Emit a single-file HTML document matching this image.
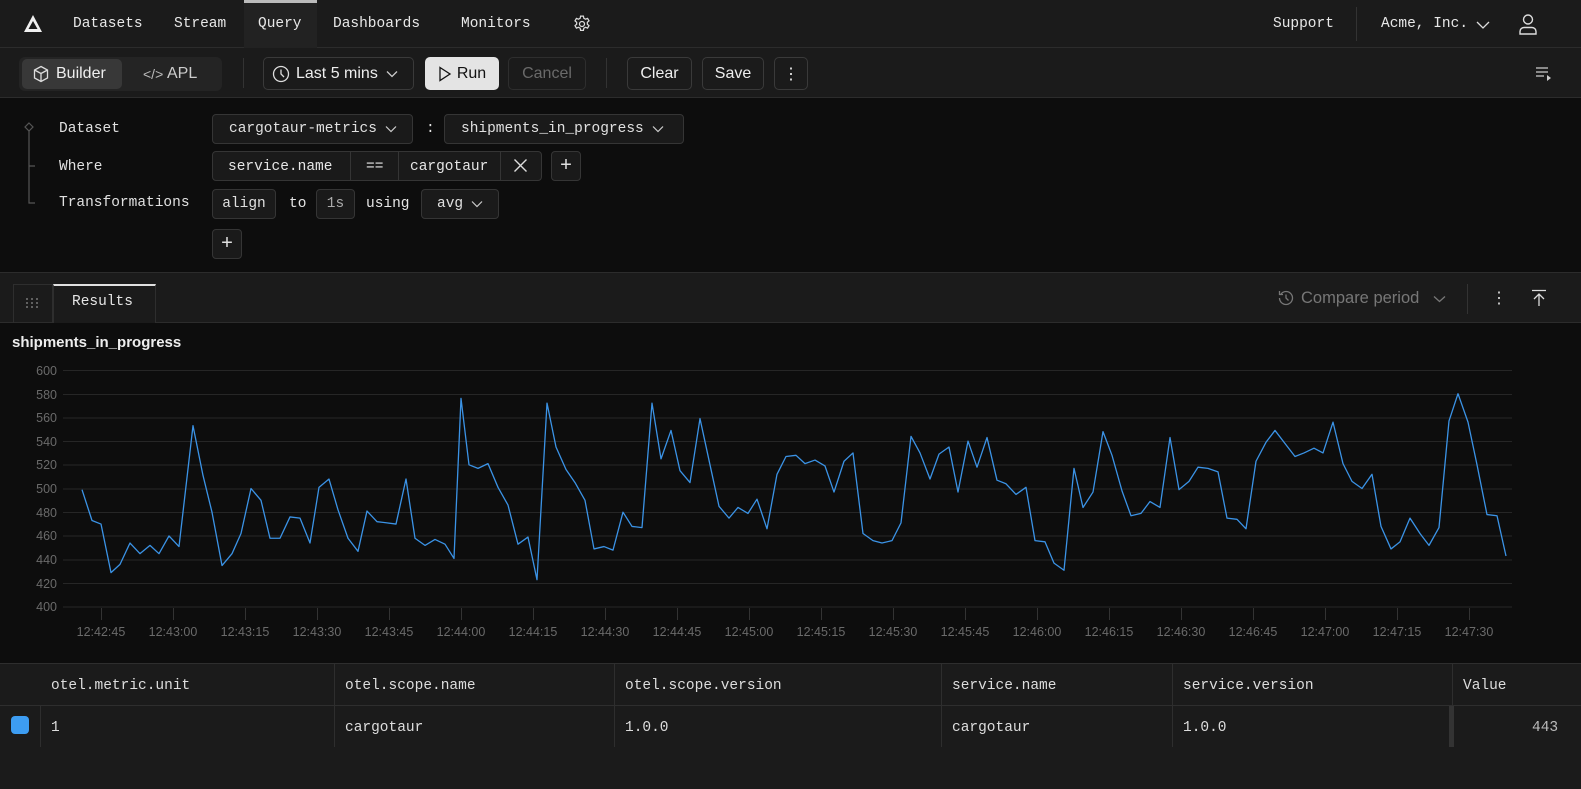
<!DOCTYPE html>
<html><head><meta charset="utf-8"><style>
*{box-sizing:border-box;margin:0;padding:0}
body{width:1581px;height:789px;background:#0d0d0d;color:#e6e6e6;font-family:"Liberation Sans",sans-serif;position:relative;overflow:hidden}
.a{position:absolute}
.mono{font-family:"Liberation Mono",monospace}
.nav{left:0;top:0;width:1581px;height:48px;background:#1b1b1b;border-bottom:1px solid #2c2c2c}
.nav .t{position:absolute;top:16px;font-size:14.5px;color:#e8e8e8}
.tb{left:0;top:48px;width:1581px;height:50px;background:#1b1b1b;border-bottom:1px solid #2c2c2c}
.btn{position:absolute;top:9px;height:33px;border:1px solid #3a3a3a;border-radius:5px;font-size:16px;display:flex;align-items:center;justify-content:center;color:#eee;padding-top:1px}
.chip{position:absolute;height:30px;border:1px solid #353535;border-radius:4px;background:#1a1a1a;font-family:"Liberation Mono",monospace;font-size:14.5px;color:#e0e0e0;display:flex;align-items:center}
.lbl{position:absolute;left:59px;font-family:"Liberation Mono",monospace;font-size:14.5px;color:#e0e0e0}
.th{position:absolute;top:678px;font-family:"Liberation Mono",monospace;font-size:14.5px;color:#ddd}
.td{position:absolute;top:720px;font-family:"Liberation Mono",monospace;font-size:14.5px;color:#ddd}
.vl{position:absolute;width:1px;background:#2e2e2e}
</style></head><body>
<div class="a nav">
 <svg class="a" style="left:22px;top:14px" width="22" height="20" viewBox="0 0 22 20"><path d="M11 1 L2 18 H20 Z M11 7 L6.5 15 H15.5 Z" fill="#f0f0f0" fill-rule="evenodd"/></svg>
 <div class="a" style="left:244px;top:0;width:73px;height:48px;background:#222"></div>
 <div class="a" style="left:244px;top:0;width:73px;height:3px;background:#bbb"></div>
 <span class="t mono" style="left:73px">Datasets</span>
 <span class="t mono" style="left:174px">Stream</span>
 <span class="t mono" style="left:258px">Query</span>
 <span class="t mono" style="left:333px">Dashboards</span>
 <span class="t mono" style="left:461px">Monitors</span>
 <svg class="a" style="left:572px;top:14px" width="20" height="20" viewBox="0 0 24 24" fill="none" stroke="#ddd" stroke-width="1.5"><path d="M10.3 2.5h3.4l.5 2.6 2 1.1 2.5-.9 1.7 2.9-2 1.8v2.2l2 1.8-1.7 2.9-2.5-.9-2 1.1-.5 2.6h-3.4l-.5-2.6-2-1.1-2.5.9-1.7-2.9 2-1.8V10L3.6 8.2l1.7-2.9 2.5.9 2-1.1z"/><circle cx="12" cy="12" r="3"/></svg>
 <span class="t mono" style="left:1273px">Support</span>
 <div class="a" style="left:1356px;top:7px;width:1px;height:34px;background:#333"></div>
 <span class="t mono" style="left:1381px">Acme, Inc.</span>
 <svg class="a" style="left:1476px;top:20px" width="14" height="10" viewBox="0 0 14 10"><path d="M1 2l6 6 6-6" fill="none" stroke="#ddd" stroke-width="1.3"/></svg>
 <svg class="a" style="left:1518px;top:13px" width="20" height="22" viewBox="0 0 20 22" fill="none" stroke="#ddd" stroke-width="1.4"><circle cx="10" cy="6.5" r="4.5"/><path d="M2 21v-2.5a4 4 0 014-4h8a4 4 0 014 4V21z"/></svg>
</div>
<div class="a tb">
 <div class="a" style="left:19px;top:9px;width:203px;height:34px;background:#242424;border-radius:6px"></div>
 <div class="a" style="left:22px;top:11px;width:100px;height:30px;background:#383838;border-radius:5px"></div>
 <svg class="a" style="left:32px;top:17px" width="18" height="18" viewBox="0 0 18 18" fill="none" stroke="#ddd" stroke-width="1.3"><path d="M9 1.5l6.5 3.5v8L9 16.5 2.5 13V5z M2.5 5L9 8.5 15.5 5 M9 8.5v8"/></svg>
 <span class="a" style="left:56px;top:17px;font-size:16px;color:#eee">Builder</span>
 <span class="a" style="left:143px;top:18px;font-size:14px;color:#bbb">&lt;/&gt;</span>
 <span class="a" style="left:167px;top:17px;font-size:16px;color:#ccc">APL</span>
 <div class="a" style="left:243px;top:10px;width:1px;height:30px;background:#333"></div>
 <div class="btn" style="left:263px;width:151px;justify-content:flex-start;padding-left:8px"><svg width="18" height="18" viewBox="0 0 18 18" fill="none" stroke="#ddd" stroke-width="1.3"><circle cx="9" cy="9" r="7.5"/><path d="M9 4.5V9l3 3"/></svg><span style="margin-left:6px">Last 5 mins</span><svg style="margin-left:8px" width="12" height="8" viewBox="0 0 12 8"><path d="M1 1.5l5 5 5-5" fill="none" stroke="#ccc" stroke-width="1.3"/></svg></div>
 <div class="btn" style="left:425px;width:74px;background:#e4e4e4;border-color:#e4e4e4;color:#111"><svg width="14" height="16" viewBox="0 0 14 16"><path d="M2 1.5l10 6.5-10 6.5z" fill="none" stroke="#111" stroke-width="1.3"/></svg><span style="margin-left:5px">Run</span></div>
 <div class="btn" style="left:508px;width:78px;color:#6a6a6a;border-color:#2e2e2e">Cancel</div>
 <div class="a" style="left:606px;top:10px;width:1px;height:30px;background:#333"></div>
 <div class="btn" style="left:627px;width:65px">Clear</div>
 <div class="btn" style="left:702px;width:62px">Save</div>
 <div class="btn" style="left:774px;width:34px">⋮</div>
 <svg class="a" style="left:1535px;top:18px" width="18" height="16" viewBox="0 0 18 16"><path d="M1 2h12M1 6h12M1 10h8" stroke="#ccc" stroke-width="1.3"/><path d="M12 9l4 3-4 3z" fill="#ccc"/></svg>
</div>
<!-- query builder -->
<svg class="a" style="left:22px;top:120px" width="14" height="90" viewBox="0 0 14 90" fill="none" stroke="#555" stroke-width="1.2"><path d="M7 3l4 4-4 4-4-4z"/><path d="M7 11v72h6M7 46h6"/></svg>
<span class="lbl" style="top:121px">Dataset</span>
<span class="lbl" style="top:159px">Where</span>
<span class="lbl" style="top:195px">Transformations</span>
<div class="chip" style="left:212px;top:114px;width:201px;padding-left:16px">cargotaur-metrics<svg style="margin-left:8px" width="12" height="8" viewBox="0 0 12 8"><path d="M1 1.5l5 5 5-5" fill="none" stroke="#ccc" stroke-width="1.2"/></svg></div>
<span class="a mono" style="left:426px;top:121px;font-size:14.5px">:</span>
<div class="chip" style="left:444px;top:114px;width:240px;padding-left:16px">shipments_in_progress<svg style="margin-left:8px" width="12" height="8" viewBox="0 0 12 8"><path d="M1 1.5l5 5 5-5" fill="none" stroke="#ccc" stroke-width="1.2"/></svg></div>
<div class="chip" style="left:212px;top:151px;width:330px"></div>
<span class="a mono" style="left:228px;top:159px;font-size:14.5px">service.name</span>
<div class="vl" style="left:350px;top:152px;height:28px;background:#353535"></div>
<span class="a mono" style="left:366px;top:159px;font-size:14.5px">==</span>
<div class="vl" style="left:398px;top:152px;height:28px;background:#353535"></div>
<span class="a mono" style="left:410px;top:159px;font-size:14.5px">cargotaur</span>
<div class="vl" style="left:500px;top:152px;height:28px;background:#353535"></div>
<svg class="a" style="left:513px;top:158px" width="15" height="15" viewBox="0 0 15 15"><path d="M1.5 1.5l12 12M13.5 1.5l-12 12" stroke="#ddd" stroke-width="1.4"/></svg>
<div class="chip" style="left:551px;top:151px;width:30px;justify-content:center;font-size:20px">+</div>
<div class="chip" style="left:212px;top:189px;width:64px;justify-content:center">align</div>
<span class="a mono" style="left:289px;top:196px;font-size:14.5px">to</span>
<div class="chip" style="left:316px;top:189px;width:39px;justify-content:center;color:#aaa">1s</div>
<span class="a mono" style="left:366px;top:196px;font-size:14.5px">using</span>
<div class="chip" style="left:421px;top:189px;width:78px;padding-left:15px">avg<svg style="margin-left:8px" width="12" height="8" viewBox="0 0 12 8"><path d="M1 1.5l5 5 5-5" fill="none" stroke="#ccc" stroke-width="1.2"/></svg></div>
<div class="chip" style="left:212px;top:229px;width:30px;justify-content:center;font-size:20px">+</div>
<!-- results bar -->
<div class="a" style="left:0;top:272px;width:1581px;height:51px;background:#1b1b1b;border-top:1px solid #2c2c2c;border-bottom:1px solid #2c2c2c"></div>
<div class="a" style="left:13px;top:284px;width:40px;height:39px;border:1px solid #2e2e2e;border-bottom:none"></div>
<svg class="a" style="left:25px;top:297px" width="14" height="12" viewBox="0 0 14 12" fill="#777"><circle cx="2" cy="2" r="1"/><circle cx="7" cy="2" r="1"/><circle cx="12" cy="2" r="1"/><circle cx="2" cy="6" r="1"/><circle cx="7" cy="6" r="1"/><circle cx="12" cy="6" r="1"/><circle cx="2" cy="10" r="1"/><circle cx="7" cy="10" r="1"/><circle cx="12" cy="10" r="1"/></svg>
<div class="a" style="left:53px;top:284px;width:103px;height:39px;background:#1b1b1b;border:1px solid #2e2e2e;border-top:2px solid #e0e0e0;border-bottom:none"></div>
<span class="a mono" style="left:72px;top:294px;font-size:14.5px">Results</span>
<svg class="a" style="left:1277px;top:289px" width="18" height="18" viewBox="0 0 18 18" fill="none" stroke="#777" stroke-width="1.3"><path d="M2.5 9a6.5 6.5 0 106.5-6.5A6.5 6.5 0 004 5M2.5 2v3.5H6"/><path d="M9 5.5V9l2.5 2.5"/></svg>
<span class="a" style="left:1301px;top:289px;font-size:16.5px;color:#777">Compare period</span>
<svg class="a" style="left:1433px;top:295px" width="13" height="8" viewBox="0 0 13 8"><path d="M1 1.5l5.5 5 5.5-5" fill="none" stroke="#777" stroke-width="1.3"/></svg>
<div class="a" style="left:1467px;top:284px;width:1px;height:30px;background:#333"></div>
<span class="a" style="left:1491px;top:288px;font-size:16px;color:#ddd">⋮</span>
<svg class="a" style="left:1530px;top:289px" width="18" height="18" viewBox="0 0 18 18" fill="none" stroke="#ddd" stroke-width="1.3"><path d="M2 1.5h14M9 17V5M4 10l5-5 5 5"/></svg>
<!-- chart -->
<span class="a" style="left:12px;top:334px;font-size:15px;font-weight:bold;color:#eee">shipments_in_progress</span>
<svg class="a" style="left:0;top:0" width="1581" height="663">
 <g stroke="#262626" stroke-width="1">
  <path d="M63 370.5H1512M63 394.5H1512M63 418H1512M63 441.5H1512M63 465H1512M63 489H1512M63 512.5H1512M63 536H1512M63 560H1512M63 583.5H1512M63 607H1512"/>
 </g>
 <g stroke="#333" stroke-width="1"><path d="M101.5 608v12M173.5 608v12M245.5 608v12M317.5 608v12M389.5 608v12M461.5 608v12M533.5 608v12M605.5 608v12M677.5 608v12M749.5 608v12M821.5 608v12M893.5 608v12M965.5 608v12M1037.5 608v12M1109.5 608v12M1181.5 608v12M1253.5 608v12M1325.5 608v12M1397.5 608v12M1469.5 608v12"/></g>
 <g font-family="Liberation Sans, sans-serif" font-size="12.5" fill="#6a6a6a" text-anchor="end">
  <text x="57" y="375">600</text><text x="57" y="399">580</text><text x="57" y="422">560</text><text x="57" y="446">540</text><text x="57" y="469">520</text><text x="57" y="493">500</text><text x="57" y="517">480</text><text x="57" y="540">460</text><text x="57" y="564">440</text><text x="57" y="588">420</text><text x="57" y="611">400</text>
 </g>
 <g font-family="Liberation Sans, sans-serif" font-size="12.5" fill="#6a6a6a" text-anchor="middle">
  <text x="101" y="636">12:42:45</text><text x="173" y="636">12:43:00</text><text x="245" y="636">12:43:15</text><text x="317" y="636">12:43:30</text><text x="389" y="636">12:43:45</text><text x="461" y="636">12:44:00</text><text x="533" y="636">12:44:15</text><text x="605" y="636">12:44:30</text><text x="677" y="636">12:44:45</text><text x="749" y="636">12:45:00</text><text x="821" y="636">12:45:15</text><text x="893" y="636">12:45:30</text><text x="965" y="636">12:45:45</text><text x="1037" y="636">12:46:00</text><text x="1109" y="636">12:46:15</text><text x="1181" y="636">12:46:30</text><text x="1253" y="636">12:46:45</text><text x="1325" y="636">12:47:00</text><text x="1397" y="636">12:47:15</text><text x="1469" y="636">12:47:30</text>
 </g>
 <polyline transform="matrix(1,0,0,-1.185,0,1081)" vector-effect="non-scaling-stroke" fill="none" stroke="#3b93e6" stroke-width="1.3" stroke-linejoin="round" points="82,499 92,473 101,470 111,429 120,436 130,454 140,445 150,452 159,445 169,460 179,451 193,553 203,511 212,480 222,435 232,445 241,462 251,500 261,490 270,458 280,458 290,476 300,475 310,454 319,501 329,508 338,482 348,458 358,447 367,481 377,472 387,471 396,470 406,508 415,458 425,452 435,457 445,453 454,441 461,576 469,520 478,517 488,521 498,501 508,486 518,453 528,459 537,423 547,572 556,535 566,516 575,505 585,490 594,449 604,451 613,448 623,480 632,468 642,467 652,572 661,525 671,549 680,515 690,505 700,559 710,520 719,485 729,475 738,484 748,479 757,491 767,466 777,512 786,527 796,528 805,521 815,524 825,519 834,497 844,523 853,530 863,462 873,456 882,454 892,456 901,471 911,544 920,530 930,508 939,529 949,535 958,497 968,540 977,518 987,543 997,507 1006,504 1016,495 1026,501 1035,456 1045,455 1054,437 1064,431 1074,517 1083,484 1093,497 1103,548 1112,528 1122,498 1131,477 1141,479 1150,489 1160,484 1170,543 1179,499 1189,506 1198,518 1208,517 1218,514 1227,475 1237,474 1246,466 1256,523 1266,539 1275,549 1285,538 1295,527 1304,530 1314,534 1323,530 1333,556 1343,521 1352,506 1362,500 1372,512 1381,468 1391,449 1400,455 1410,475 1420,462 1429,452 1439,467 1449,557 1458,580 1468,556 1477,520 1487,478 1497,477 1506,443"/>
</svg>
<!-- table -->
<div class="a" style="left:0;top:663px;width:1581px;height:126px;background:#1b1b1b;border-top:1px solid #2e2e2e"></div>
<div class="a" style="left:0;top:705px;width:1581px;height:1px;background:#2e2e2e"></div>
<div class="vl" style="left:334px;top:664px;height:83px"></div>
<div class="vl" style="left:614px;top:664px;height:83px"></div>
<div class="vl" style="left:941px;top:664px;height:83px"></div>
<div class="vl" style="left:1172px;top:664px;height:83px"></div>
<div class="vl" style="left:1452px;top:664px;height:41px"></div>
<div class="vl" style="left:40px;top:706px;height:41px"></div>
<div class="a" style="left:1449px;top:706px;width:5px;height:41px;background:#333"></div>
<div class="a" style="left:11px;top:716px;width:18px;height:18px;background:#3d9df2;border-radius:4px"></div>
<span class="th" style="left:51px">otel.metric.unit</span>
<span class="th" style="left:345px">otel.scope.name</span>
<span class="th" style="left:625px">otel.scope.version</span>
<span class="th" style="left:952px">service.name</span>
<span class="th" style="left:1183px">service.version</span>
<span class="th" style="left:1463px">Value</span>
<span class="td" style="left:51px">1</span>
<span class="td" style="left:345px">cargotaur</span>
<span class="td" style="left:625px">1.0.0</span>
<span class="td" style="left:952px">cargotaur</span>
<span class="td" style="left:1183px">1.0.0</span>
<span class="td" style="left:1532px;color:#bbb">443</span>
</body></html>
